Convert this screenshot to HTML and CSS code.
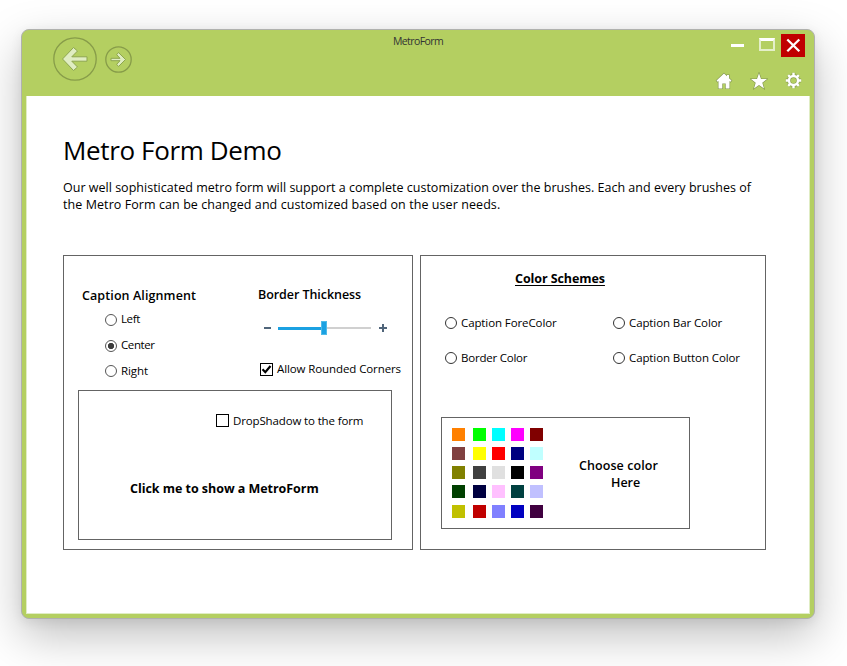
FILE: index.html
```html
<!DOCTYPE html>
<html lang="en">
<head>
<meta charset="utf-8">
<title>MetroForm</title>
<link rel="stylesheet" href="styles.css">
</head>
<body>
<div class="window">
  <header class="titlebar">
    <nav class="nav">
      <svg class="back" width="44" height="44" viewBox="0 0 44 44"><circle cx="22" cy="22" r="21.2"/><path d="M9.5 22 20.5 10.5 24.500 14 18.800 19.800H34V24.200H18.800L24.500 30 20.500 33.500Z"/></svg>
      <svg class="forward" width="27" height="27" viewBox="0 0 27 27"><circle cx="13.500" cy="13.500" r="12.700"/><path d="M20.500 13.500 13.500 6.500 11.700 8.700 15 12.300H6V14.700H15L11.700 18.300 13.500 20.500Z"/></svg>
    </nav>
    <div class="caption">MetroForm</div>
    <div class="tools">
      <div class="controls">
        <span class="minimize"></span>
        <span class="maximize"></span>
        <svg class="close" width="24" height="23" viewBox="0 0 24 23"><path d="M6.300 5.500 18.300 17.300M18.300 5.500 6.300 17.300"/></svg>
      </div>
      <div class="actions">
        <svg width="18" height="18" viewBox="0 0 18 18"><path d="M9 1.500 1.500 8.500 2.500 9.700 3.500 9V16.500H7.300V11.500H10.700V16.500H14.500V9L15.500 9.700 16.500 8.500 14 6.200V3H12V4.300Z"/></svg>
        <svg width="18" height="18" viewBox="0 0 18 18"><path d="M9 1.300 11 7H17L12.300 10.700 14 16.500 9 13 4 16.500 5.700 10.700 1 7H7Z"/></svg>
        <svg class="gear" width="18" height="18" viewBox="0 0 18 18"><g class="edge"><circle cx="8.500" cy="8.500" r="4.500"/><path d="M8.500 .8V4M8.500 13V16.200M.8 8.500H4M13 8.500H16.200M3.200 3.200 5.200 5.200M11.800 11.800 13.800 13.800M13.800 3.200 11.800 5.200M5.200 11.800 3.200 13.800"/></g><g><circle cx="8.500" cy="8.500" r="4.500"/><path d="M8.500 .8V4M8.500 13V16.200M.8 8.500H4M13 8.500H16.200M3.200 3.200 5.200 5.200M11.800 11.800 13.800 13.800M13.800 3.200 11.800 5.200M5.200 11.800 3.200 13.800"/></g></svg>
      </div>
    </div>
  </header>
  <main class="client">
    <h1>Metro Form Demo</h1>
    <p class="intro"><span class="l1">Our well sophisticated metro form will support a complete customization over the brushes. Each and every brushes of</span><br><span class="l2">the Metro Form can be changed and customized based on the user needs.</span></p>
    <div class="panels">
      <section class="panel settings">
        <div class="columns">
          <div class="alignment">
            <h2 class="h-align">Caption Alignment</h2>
            <div class="option gray"><i class="radio"></i><span class="t-left">Left</span></div>
            <div class="option gray"><i class="radio on"></i><span class="t-center">Center</span></div>
            <div class="option gray"><i class="radio"></i><span>Right</span></div>
          </div>
          <div class="border">
            <h2 class="h-border">Border Thickness</h2>
            <div class="slider"><i class="minus"></i><i class="fill"></i><i class="thumb"></i><i class="rest"></i><i class="plus"></i></div>
            <div class="option"><i class="check"><svg width="11" height="11" viewBox="0 0 11 11"><path d="M1.500 5.300 4.300 8.200 9.500 2"/></svg></i><span>Allow Rounded Corners</span></div>
          </div>
        </div>
        <div class="demo">
          <div class="option"><i class="check"></i><span class="t-shadow">DropShadow to the form</span></div>
          <div class="launch">Click me to show a MetroForm</div>
        </div>
      </section>
      <section class="panel schemes">
        <h2 class="h-schemes">Color Schemes</h2>
        <div class="targets">
          <div class="option"><i class="radio"></i><span>Caption ForeColor</span></div>
          <div class="option"><i class="radio"></i><span>Caption Bar Color</span></div>
          <div class="option"><i class="radio"></i><span class="t-bcolor">Border Color</span></div>
          <div class="option"><i class="radio"></i><span>Caption Button Color</span></div>
        </div>
        <div class="picker">
          <div class="swatches">
            <i style="background:#ff8000"></i><i style="background:#0f0"></i><i style="background:#0ff"></i><i style="background:#f0f"></i><i style="background:#800000"></i>
            <i style="background:#804040"></i><i style="background:#ff0"></i><i style="background:#f00"></i><i style="background:#000080"></i><i style="background:#c0ffff"></i>
            <i style="background:#808000"></i><i style="background:#404040"></i><i style="background:#e0e0e0"></i><i style="background:#000"></i><i style="background:#800080"></i>
            <i style="background:#004000"></i><i style="background:#000040"></i><i style="background:#ffc0ff"></i><i style="background:#004040"></i><i style="background:#c0c0ff"></i>
            <i style="background:#c0c000"></i><i style="background:#c00000"></i><i style="background:#8080ff"></i><i style="background:#0000c0"></i><i style="background:#400040"></i>
          </div>
          <div class="choose"><span class="c1">Choose color</span><span class="c2">Here</span></div>
        </div>
      </section>
    </div>
  </main>
</div>
</body>
</html>
```
FILE: styles.css
```css
* { box-sizing: border-box; }
body { margin: 0; padding: 29px 0 0 21px; height: 666px; overflow: hidden; background: #fff; color: #000; font-family: "Open Sans", "Noto Sans", sans-serif; font-size: 12px; white-space: nowrap; }
h1, h2, p { margin: 0; }
i { display: block; flex: none; }
svg { display: block; flex: none; }

.window { width: 794px; height: 590px; border: 1px solid #b0b1ae; border-radius: 8px; background: #b4cf61; box-shadow: 0 17px 46px rgba(0,0,0,.25), 0 3px 12px rgba(0,0,0,.07); }
.titlebar { display: grid; grid-template-columns: 1fr 100px 1fr; height: 66px; }
.nav { display: flex; align-items: center; gap: 7px; padding: 0 0 8px 31px; }
.nav .forward { margin-left: .500px; }
.nav svg circle { fill: none; stroke: #879c49; stroke-width: 1.3; }
.nav svg path { fill: #e0edc2; stroke: #8da64f; stroke-width: 1; }
.caption { padding-top: 3px; line-height: 16px; font-size: 10.500px; text-align: center; color: #333; letter-spacing: -.6px; }
.tools { display: flex; flex-direction: column; align-items: flex-end; padding: 4px 9px 0 0; }
.controls { display: flex; align-items: flex-start; }
.minimize { width: 13px; height: 3px; margin: 10px 15px 0 0; background: #fff; }
.maximize { width: 16px; height: 13px; margin: 4px 6px 0 0; border: 2px solid #e4efc9; border-top: 3px solid #fff; }
.close { background: #c00000; }
.close path { fill: none; stroke: #fff; stroke-width: 2.3; }
.actions { display: flex; gap: 17px; margin: 14.500px 2px 0 0; }
.actions path { fill: #fff; stroke: #829650; stroke-width: 1.200; paint-order: stroke; }
.actions .gear { overflow: visible; }
.actions .gear path, .actions .gear circle { fill: none; stroke: #fff; stroke-width: 2.400; }
.actions .gear .edge path, .actions .gear .edge circle { stroke: #8ca451; stroke-width: 3.8; }

.client { width: 784px; height: 518px; margin-left: 4px; border: 1px solid #e0edc4; border-top: 0; background: #fff; padding: 36px 0 0 36px; }
h1 { height: 37px; line-height: 37px; font-size: 26px; font-weight: 400; letter-spacing: -.36px; }
.intro { margin-top: 10px; line-height: 17px; font-size: 12.500px; }
.l1 { letter-spacing: .015px; }
.l2 { letter-spacing: .075px; }
.panels { display: flex; gap: 7px; margin-top: 42px; }
.panel { height: 295px; border: 1px solid #646464; }
.settings { width: 350px; }
.schemes { width: 346px; }
h2 { line-height: 18px; font-size: 12.500px; font-weight: 600; }
.h-align { letter-spacing: .1px; padding-top: 1px; margin-bottom: -1px; }
.h-border { letter-spacing: -.06px; padding-top: 1px; margin-bottom: -1px; }
.option { display: flex; align-items: center; gap: 4px; height: 18px; line-height: 18px; font-size: 11.500px; letter-spacing: -.1px; }
.radio { width: 12px; height: 12px; border: 1px solid #333; border-radius: 50%; }
.gray .radio { border-color: #555; }
.radio.on { background: radial-gradient(circle, #3c3c3c 0 2.800px, #fff 3.500px); }
.check { width: 13px; height: 13px; border: 1px solid #000; }
.check path { fill: none; stroke: #000; stroke-width: 2.200; }
.gray .t-left, .gray .t-center { margin-top: -2px; }
.t-left { letter-spacing: -.4px; }
.t-center { letter-spacing: -.4px; }
.t-shadow { margin-top: 2px; letter-spacing: -.14px; }
.t-bcolor { letter-spacing: -.22px; }

.columns { display: flex; height: 134px; padding-left: 18px; }
.alignment { width: 176px; padding-top: 30px; }
.alignment .option { margin: 7px 0 0 23px; }
.alignment .option:nth-child(3) { margin-top: 8px; }
.border { padding-top: 29px; }
.slider { display: flex; align-items: center; height: 14px; margin: 18px 0 0 6px; }
.minus { width: 7px; height: 2px; margin-right: 7px; background: #50657a; }
.fill { width: 43px; height: 3px; background: #1ba1e2; }
.thumb { width: 6px; height: 14px; border: 1px solid #4fbbe8; background: #1ba1e2; }
.rest { width: 44px; height: 2px; background: #d0d0d0; }
.plus { width: 8px; height: 8px; margin-left: 8px; background: linear-gradient(#50657a,#50657a) 0 50%/8px 2px no-repeat, linear-gradient(#50657a,#50657a) 50% 0/2px 8px no-repeat; }
.border .option { margin: 25px 0 0 2px; }
.demo { width: 314px; height: 150px; margin-left: 14px; border: 1px solid #646464; padding-top: 20px; }
.demo .option { margin-left: 137px; }
.launch { margin: 51px 0 0 51px; line-height: 18px; font-size: 12.500px; font-weight: 700; letter-spacing: -.04px; }

.h-schemes { width: fit-content; margin: 14px 0 0 94px; font-weight: 700; letter-spacing: -.08px; text-decoration: underline; text-underline-offset: 2px; }
.targets { display: grid; grid-template-columns: 168px 1fr; row-gap: 17px; margin: 26px 0 0 24px; }
.picker { display: flex; width: 249px; height: 112px; margin: 50px 0 0 20px; border: 1px solid #646464; padding: 10px 0 0 10px; }
.swatches { display: grid; grid-template-columns: 21px 19px 19px 19px 13px; grid-template-rows: 19px 19px 19px 20px 13px; }
.swatches i { width: 13px; height: 13px; }
.choose { display: flex; flex-direction: column; margin: 29px 0 0 36px; line-height: 17px; font-size: 12.500px; font-weight: 600; }
.c1 { letter-spacing: .08px; }
.c2 { margin-left: 32px; }
```
